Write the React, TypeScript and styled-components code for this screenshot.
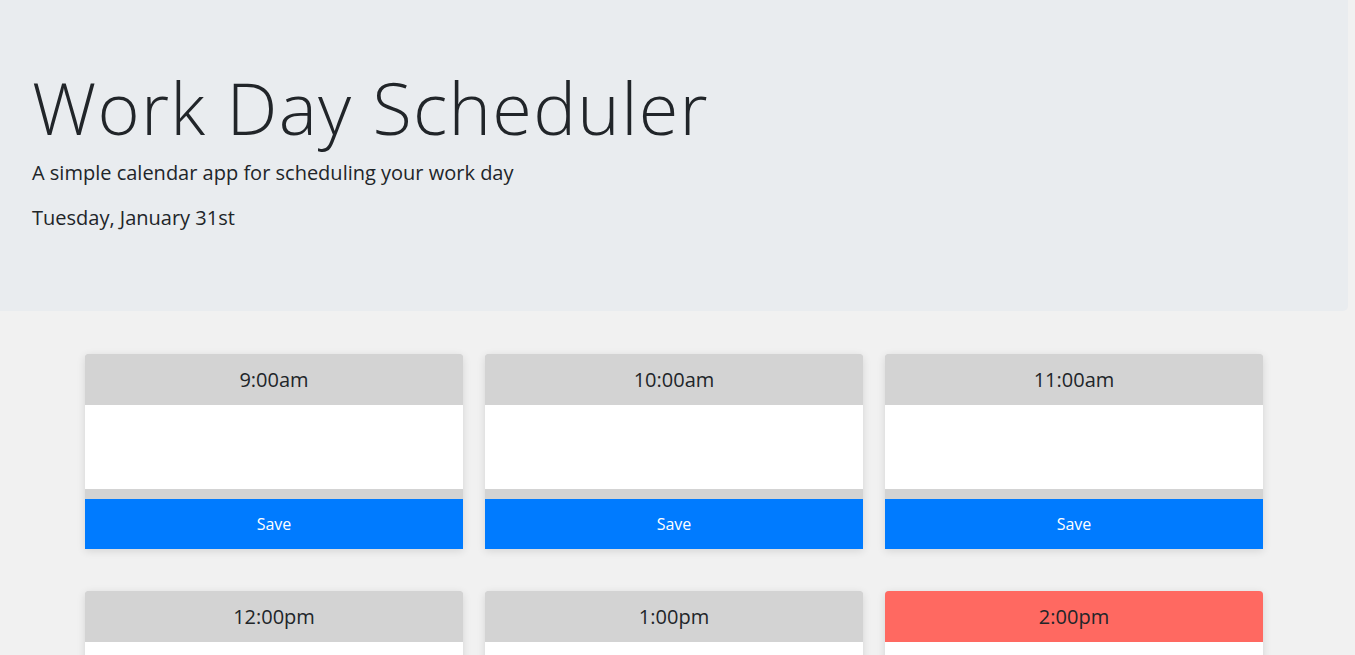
import React, { useState } from 'react'
import styled, { createGlobalStyle } from 'styled-components'

const GlobalStyle = createGlobalStyle`
    html, body {
        margin: 0;
        padding: 0;
        overflow: hidden;
    }
    body {
        background: #f1f1f1;
        font-family: "Open Sans", "Liberation Sans", sans-serif;
        color: #212529;
    }
`

type Tense = 'past' | 'present' | 'future'

const hours = [9, 10, 11, 12, 13, 14, 15, 16, 17]
const currentHour = 14

const label = (h: number) => {
    const suffix = h < 12 ? 'am' : 'pm'
    const shown = h > 12 ? h - 12 : h
    return `${shown}:00${suffix}`
}

export default function App() {
    const [notes, setNotes] = useState<Record<number, string>>({})

    return (
        <Page>
            <GlobalStyle />
            <Jumbotron>
                <Title>Work Day Scheduler</Title>
                <Lead>A simple calendar app for scheduling your work day</Lead>
                <Lead>Tuesday, January 31st</Lead>
            </Jumbotron>
            <Grid>
                {hours.map((h) => {
                    const tense: Tense = h < currentHour ? 'past' : h === currentHour ? 'present' : 'future'
                    return (
                        <Block key={h}>
                            <Hour $tense={tense}>{label(h)}</Hour>
                            <Note
                                value={notes[h] || ''}
                                onChange={(e) => setNotes({ ...notes, [h]: e.target.value })}
                            />
                            <SaveBtn>Save</SaveBtn>
                        </Block>
                    )
                })}
            </Grid>
        </Page>
    )
}

const Page = styled.div`
    height: 100vh;
    overflow-y: scroll;
    padding-right: 7px;
    box-sizing: border-box;
    &::-webkit-scrollbar {
        width: 7px;
    }
    &::-webkit-scrollbar-track {
        background: #f1f1f1;
    }
    &::-webkit-scrollbar-thumb {
        background: #c1c1c1;
    }
`

const Jumbotron = styled.header`
    background: #e9ecef;
    padding: 64px 32px 63px;
    margin-bottom: 43px;
    border-bottom-right-radius: 5px;
`

const Title = styled.h1`
    font-size: 72px;
    font-weight: 300;
    letter-spacing: 1.3px;
    line-height: 1.2;
    margin: 0 0 8px;
`

const Lead = styled.p`
    font-size: 20px;
    font-weight: 400;
    line-height: 1.5;
    margin: 0 0 15px;
`

const Grid = styled.main`
    width: 1178px;
    margin: 0 auto 40px;
    display: grid;
    grid-template-columns: repeat(3, 378px);
    column-gap: 22px;
    row-gap: 42px;
`

const Block = styled.section`
    display: flex;
    flex-direction: column;
    background: #d3d3d3;
    border-radius: 4px 4px 0 0;
    overflow: hidden;
    box-shadow: 0 2px 8px rgba(0, 0, 0, 0.12);
`

const tenseColor = {
    past: '#d3d3d3',
    present: '#ff6961',
    future: '#77dd77',
}

const Hour = styled.div<{ $tense: Tense }>`
    height: 51px;
    display: flex;
    align-items: center;
    justify-content: center;
    background: ${(p) => tenseColor[p.$tense]};
    font-size: 20px;
    color: #212529;
`

const Note = styled.textarea`
    display: block;
    height: 84px;
    margin: 0 0 10px;
    padding: 8px;
    box-sizing: border-box;
    border: none;
    resize: none;
    background: #fff;
    font-family: inherit;
    font-size: 16px;
    outline: none;
`

const SaveBtn = styled.button`
    height: 50px;
    border: none;
    background: #007bff;
    color: #fff;
    font-family: "Open Sans", "Liberation Sans", sans-serif;
    font-size: 16px;
    cursor: pointer;
`
